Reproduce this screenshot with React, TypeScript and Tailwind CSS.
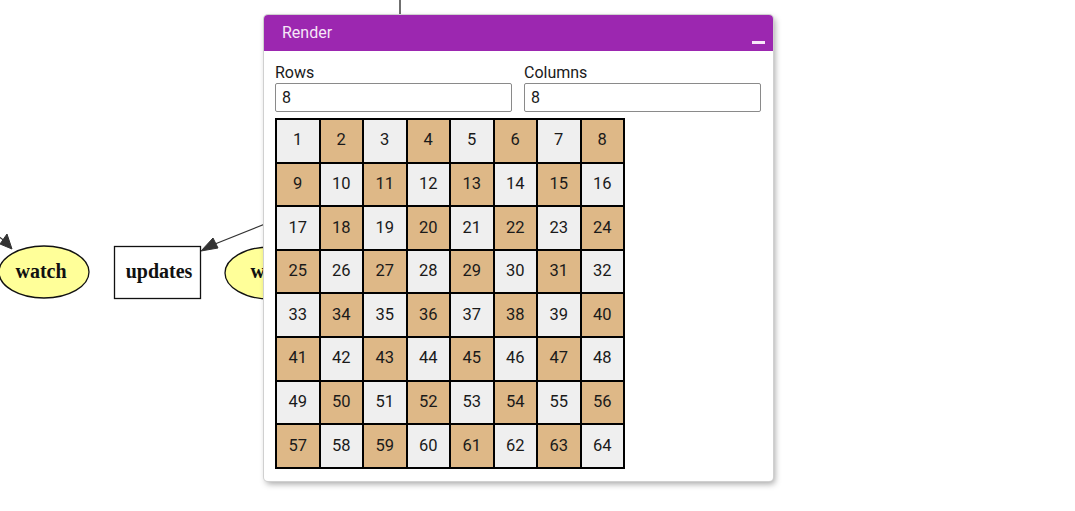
import React from "react";

const ROWS = 8;
const COLS = 8;

function Graph() {
  return (
    <svg className="absolute inset-0" width="1075" height="511" viewBox="0 0 1075 511">
      <line x1="400" y1="0" x2="400" y2="16" stroke="#222" strokeWidth="1.3" />
      {/* edge into left watch */}
      <line x1="-30" y1="215" x2="6" y2="242" stroke="#333" strokeWidth="1.2" />
      <polygon points="12,249 0,244 7,234" fill="#333" stroke="#333" />
      <ellipse cx="44" cy="272" rx="45" ry="26" fill="#ffff99" stroke="#111" strokeWidth="1.3" />
      <text x="41" y="278" textAnchor="middle" fontFamily="'Liberation Serif', serif" fontWeight="bold" fontSize="20" fill="#111">
        watch
      </text>
      {/* updates box */}
      <rect x="114.5" y="246.5" width="86" height="52" fill="#fff" stroke="#111" strokeWidth="1.3" />
      <text x="159" y="278" textAnchor="middle" fontFamily="'Liberation Serif', serif" fontWeight="bold" fontSize="20" fill="#111">
        updates
      </text>
      <line x1="270" y1="222" x2="210" y2="246" stroke="#333" strokeWidth="1.2" />
      <polygon points="201,251 213,238 218,248" fill="#333" stroke="#333" />
      <ellipse cx="270" cy="273" rx="45" ry="26" fill="#ffff99" stroke="#111" strokeWidth="1.3" />
      <text x="276" y="278" textAnchor="middle" fontFamily="'Liberation Serif', serif" fontWeight="bold" fontSize="20" fill="#111">
        watch
      </text>
    </svg>
  );
}

function Board() {
  const cells = [];
  for (let r = 0; r < ROWS; r++) {
    for (let c = 0; c < COLS; c++) {
      const n = r * COLS + c + 1;
      const dark = (r + c) % 2 === 1;
      cells.push(
        <div
          key={n}
          className={`flex h-[41.6px] items-center justify-center text-[16.5px] text-[#1a1a1a] ${dark ? "bg-[#deb887]" : "bg-[#efefef]"}`}
        >
          {n}
        </div>
      );
    }
  }
  return (
    <div className="mt-[6px] grid w-[350px] grid-cols-[repeat(8,41.5px)] gap-[2px] bg-black p-[2px]">
      {cells}
    </div>
  );
}

function Field({ label }: { label: string }) {
  return (
    <label className="flex flex-1 flex-col">
      <span className="text-[16px] leading-[19px] text-[#1a1a1a]">{label}</span>
      <input
        readOnly
        value="8"
        className="mt-[1px] h-[29px] w-full rounded-[2px] border border-[#8a8a8a] bg-white px-[6px] text-[16px] text-[#1a1a1a] outline-none"
      />
    </label>
  );
}

export default function App() {
  return (
    <div className="relative h-[511px] w-[1075px] overflow-hidden bg-white font-['Roboto',sans-serif]">
      <Graph />
      <div className="absolute left-[264px] top-[15px] flex h-[466px] w-[509px] flex-col overflow-hidden rounded-[4px] bg-white shadow-[0_0_0_1px_#d0d0d0,2px_3px_6px_rgba(0,0,0,0.35)]">
        <div className="relative flex h-[36px] items-center bg-[#9c27b0] pl-[18px] text-[16px] text-[#f6e6f8]">
          Render
          <span className="absolute right-[8px] top-[26px] h-[3px] w-[13px] bg-[#f6e6f8]" />
        </div>
        <div className="flex flex-col pl-[11px] pr-[12px] pt-[12px]">
          <div className="flex gap-[12px]">
            <Field label="Rows" />
            <Field label="Columns" />
          </div>
          <Board />
        </div>
      </div>
    </div>
  );
}
